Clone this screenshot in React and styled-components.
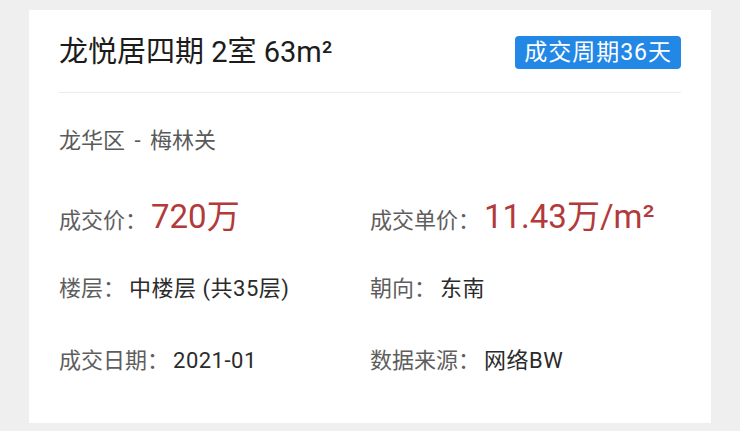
import React from "react"
import styled, { createGlobalStyle } from "styled-components"

const GlobalStyle = createGlobalStyle`
  html, body {
    margin: 0;
    padding: 0;
    background: #efefef;
  }
  body {
    font-family: Roboto, "Noto Sans CJK SC", sans-serif;
  }
`

const Page = styled.div`
  padding: 10px 29px 8px;
`

const Card = styled.div`
  background: #fff;
  height: 413px;
  box-sizing: border-box;
  padding: 26px 30px 26px;
  display: flex;
  flex-direction: column;
`

const Header = styled.div`
  display: flex;
  justify-content: space-between;
  align-items: center;
  height: 33px;
  padding-bottom: 23px;
  border-bottom: 1px solid #ececec;
`

const Title = styled.h1`
  margin: 0;
  font-size: 29px;
  font-weight: 400;
  line-height: 33px;
  color: #1c1c1c;
`

const Badge = styled.span`
  background: #2387e6;
  color: #fff;
  font-size: 23px;
  letter-spacing: 1px;
  line-height: 33px;
  height: 33px;
  padding: 0 9px 0 9px;
  border-radius: 4px;
`

const Area = styled.div`
  margin-top: 37px;
  font-size: 22px;
  line-height: 22px;
  word-spacing: 4px;
  color: #5a5a5a;
`

const Grid = styled.div`
  margin-top: 29px;
  display: grid;
  grid-template-columns: 311px 1fr;
  grid-auto-rows: 72px;
  align-items: center;
`

const Field = styled.div`
  display: flex;
  align-items: baseline;
  line-height: 1.2;
`

const Label = styled.span`
  font-size: 22px;
  color: #5e5e5e;
  margin-right: 4px;
`

const Value = styled.span`
  font-size: ${({ $big }) => ($big ? "33px" : "22px")};
  color: ${({ $big }) => ($big ? "#b23a3b" : "#2b2b2b")};
  letter-spacing: ${({ $big }) => ($big ? "0" : "0.5px")};
`

const fields = [
  { label: "成交价", value: "720万", big: true },
  { label: "成交单价", value: "11.43万/m²", big: true },
  { label: "楼层", value: "中楼层 (共35层)" },
  { label: "朝向", value: "东南" },
  { label: "成交日期", value: "2021-01" },
  { label: "数据来源", value: "网络BW" },
]

export default function App() {
  return (
    <>
      <GlobalStyle />
      <Page>
        <Card>
          <Header>
            <Title>龙悦居四期 2室 63m²</Title>
            <Badge>成交周期36天</Badge>
          </Header>
          <Area>龙华区 - 梅林关</Area>
          <Grid>
            {fields.map(f => (
              <Field key={f.label}>
                <Label>{f.label}：</Label>
                <Value $big={f.big}>{f.value}</Value>
              </Field>
            ))}
          </Grid>
        </Card>
      </Page>
    </>
  )
}
